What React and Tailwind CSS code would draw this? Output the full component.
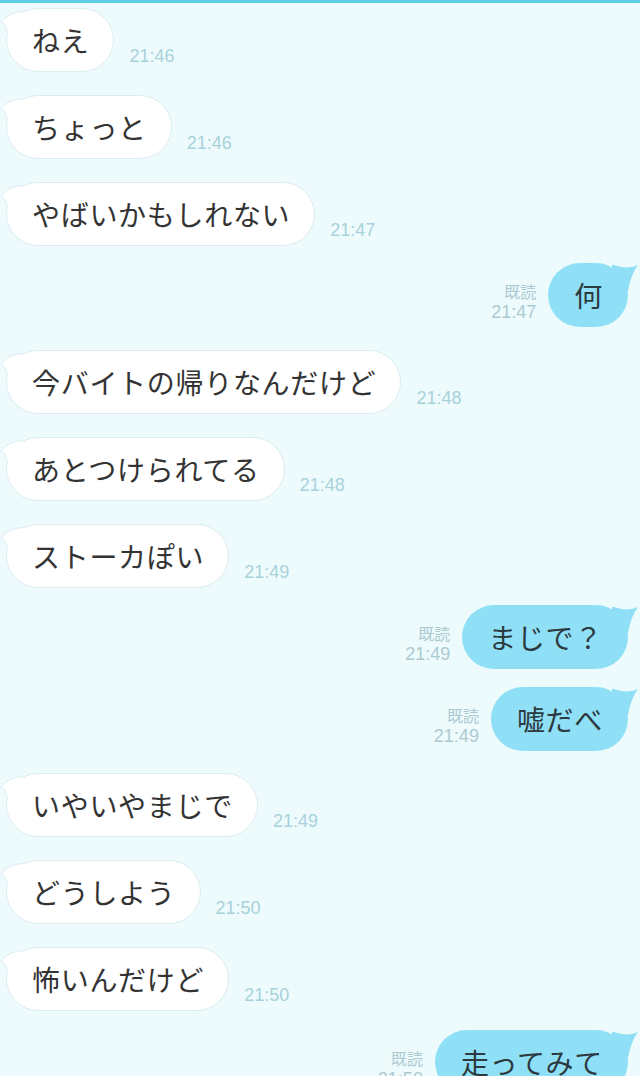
import React from 'react';

const messages = [
  { from: 'them', text: 'ねえ', time: '21:46', mt: 'mt-0' },
  { from: 'them', text: 'ちょっと', time: '21:46', mt: 'mt-[23px]' },
  { from: 'them', text: 'やばいかもしれない', time: '21:47', mt: 'mt-[23px]' },
  { from: 'me', text: '何', time: '21:47', mt: 'mt-[17px]' },
  { from: 'them', text: '今バイトの帰りなんだけど', time: '21:48', mt: 'mt-[23px]' },
  { from: 'them', text: 'あとつけられてる', time: '21:48', mt: 'mt-[23px]' },
  { from: 'them', text: 'ストーカぽい', time: '21:49', mt: 'mt-[23px]' },
  { from: 'me', text: 'まじで？', time: '21:49', mt: 'mt-[17px]' },
  { from: 'me', text: '嘘だべ', time: '21:49', mt: 'mt-[18px]' },
  { from: 'them', text: 'いやいやまじで', time: '21:49', mt: 'mt-[22px]' },
  { from: 'them', text: 'どうしよう', time: '21:50', mt: 'mt-[23px]' },
  { from: 'them', text: '怖いんだけど', time: '21:50', mt: 'mt-[23px]' },
  { from: 'me', text: '走ってみて', time: '21:50', mt: 'mt-[19px]' },
];

const jp = "font-['Noto_Sans_CJK_JP',sans-serif]";
const num = "font-['Liberation_Sans','Noto_Sans_CJK_JP',sans-serif]";

function Received({ msg }) {
  return (
    <div className={`flex items-end pl-[6px] ${msg.mt}`}>
      <div className="relative h-16 flex items-center pl-[25px] pr-[24px] bg-white rounded-full border border-[#dcecf0]">
        <svg className="absolute left-[-7px] top-[-1px]" width="26" height="30" viewBox="0 0 26 30">
          <path d="M24 3.5 Q8 4 1 14 Q6 16 7 24 L24 24 Z" fill="#ffffff" />
          <path d="M24 3.5 Q8 4 1 14 Q6 16 7 24" fill="none" stroke="#dcecf0" strokeWidth="1" />
        </svg>
        <span className={`relative text-[28px] leading-none tracking-[0.7px] text-[#333333] ${jp}`}>{msg.text}</span>
      </div>
      <span className={`ml-[15px] mb-[7px] text-[18px] leading-none text-[#a8d2db] ${num}`}>{msg.time}</span>
    </div>
  );
}

function Sent({ msg }) {
  return (
    <div className={`flex items-end justify-end pr-[12px] ${msg.mt}`}>
      <div className="flex flex-col items-end mr-[12px] mb-[6px]">
        <span className={`h-[24px] text-[16px] leading-[24px] text-[#abcad2] ${jp}`}>既読</span>
        <span className={`text-[18px] leading-none text-[#abcad2] ${num}`}>{msg.time}</span>
      </div>
      <div className="relative h-16 flex items-center pl-[26px] pr-[25px] bg-[#8fe0f6] rounded-full">
        <svg className="absolute right-[-10px] top-0" width="30" height="30" viewBox="0 0 30 30">
          <path d="M4 1.5 Q20 7 30 2 Q23 11 20 28 L4 28 Z" fill="#8fe0f6" />
        </svg>
        <span className={`relative text-[28px] leading-none tracking-[0.7px] text-[#2c393e] ${jp}`}>{msg.text}</span>
      </div>
    </div>
  );
}

export default function App() {
  return (
    <div className="w-[640px] h-[1076px] overflow-hidden bg-[#eefbfd] border-t-[3px] border-[#5fcde4] pt-[5px]">
      {messages.map((m, i) =>
        m.from === 'me' ? <Sent key={i} msg={m} /> : <Received key={i} msg={m} />
      )}
    </div>
  );
}
